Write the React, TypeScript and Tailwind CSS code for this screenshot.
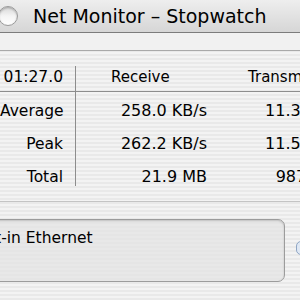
const stripes =
  "bg-[repeating-linear-gradient(180deg,#f3f3f3_0px,#f3f3f3_2px,#e9e9e9_2px,#e9e9e9_4px)]"

const rows = [
  { label: "Average", rx: "258.0 KB/s", tx: "11.3 KB/s", txPad: "pr-[19px]" },
  { label: "Peak", rx: "262.2 KB/s", tx: "11.5 KB/s", txPad: "pr-[19px]" },
  { label: "Total", rx: "21.9 MB", tx: "987.5 KB", txPad: "pr-[12px]" },
]

export default function App() {
  return (
    <div
      className={`w-[300px] h-[300px] overflow-hidden text-black ${stripes}`}
      style={{ fontFamily: '"DejaVu Sans", "Liberation Sans", sans-serif' }}
    >
      {/* title bar */}
      <div className="h-[33px] flex items-center border-b border-[#7c7c7c] bg-gradient-to-b from-[#eeeeee] to-[#d6d6d6]">
        <div className="ml-[-2px] w-[20px] h-[20px] rounded-full border border-[#9a9a9a] bg-gradient-to-b from-[#d8d8d8] via-[#f4f4f4] to-[#ffffff] shadow-[inset_0_1px_2px_rgba(0,0,0,0.25)]" />
        <span className="ml-[15px] text-[19px] leading-none">Net Monitor – Stopwatch</span>
      </div>

      {/* toolbar strip */}
      <div className="h-[18px] border-b border-[#a9a9a9] bg-[#f1f1f1]" />

      {/* stats table */}
      <div className="mt-[15px] text-[15.5px] leading-[18px]">
        <div className="flex h-[26px] border-b border-[#8d8d8d]">
          <div className="w-[76px] shrink-0 border-r border-[#8d8d8d] pt-[2px] pr-[12px] text-right">01:27.0</div>
          <div className="w-[150px] shrink-0 pt-[2px] pl-[35px] text-[15px]">Receive</div>
          <div className="w-[134px] shrink-0 pt-[2px] pl-[22px] text-[15px]">Transmit</div>
        </div>
        {rows.map((r, i) => (
          <div key={r.label} className={`flex ${i === 2 ? "h-[28px]" : "h-[33px]"}`}>
            <div className="w-[76px] shrink-0 border-r border-[#8d8d8d] pt-[10px] pr-[12px] text-right whitespace-nowrap">{r.label}</div>
            <div className="w-[150px] shrink-0 pt-[10px] pr-[19px] text-right text-[16px] whitespace-nowrap">{r.rx}</div>
            <div className={`w-[134px] shrink-0 pt-[10px] ${r.txPad} text-right text-[16px] whitespace-nowrap`}>{r.tx}</div>
          </div>
        ))}
      </div>

      {/* separator */}
      <div className="mt-[15px] h-px bg-[#c4c4c4]" />

      {/* interface box */}
      <div className="mt-[17px] flex items-start">
        <div className="ml-[-50px] w-[335px] h-[63px] shrink-0 rounded-[7px] border border-[#9c9c9c] bg-[#e3e3e3]/70 shadow-[inset_0_1px_2px_rgba(0,0,0,0.18)] pl-[15px] pt-[9px] text-[15.5px] leading-[18px] whitespace-nowrap">
          Built-in Ethernet
        </div>
        <div className="ml-[11px] mt-[22px] w-[10px] h-[14px] shrink-0 rounded-l-[5px] border border-[#8fa6c4] bg-[#dfe8f4]" />
      </div>
    </div>
  )
}
